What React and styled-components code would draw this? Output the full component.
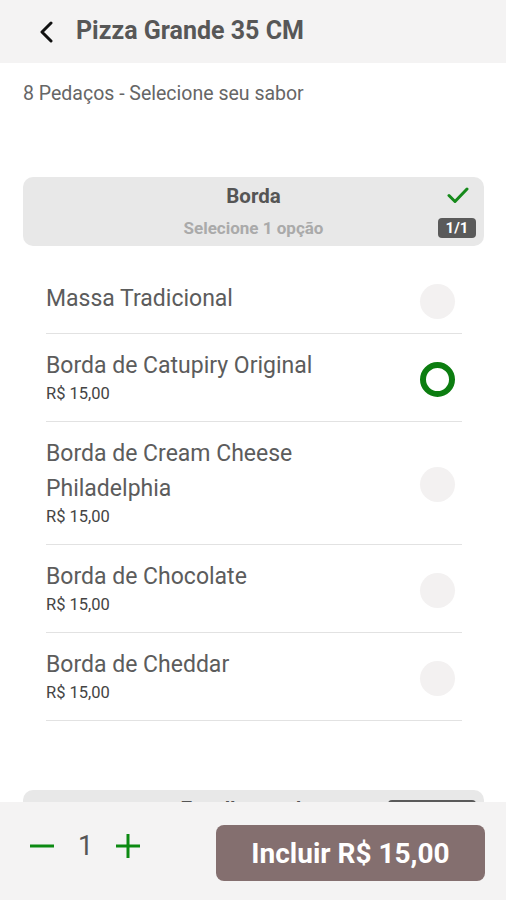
import React from "react";
import styled, { createGlobalStyle } from "styled-components";

const Global = createGlobalStyle`
  html, body { margin: 0; padding: 0; background: #ffffff; }
  body { font-family: Roboto, "Noto Sans", Arial, sans-serif; color: #5a5a5a; }
  * { box-sizing: border-box; }
`;

const Page = styled.div`
  width: 506px;
  min-height: 900px;
  padding-bottom: 200px;
  background: #fff;
`;

const Header = styled.header`
  height: 63px;
  background: #f4f3f3;
  display: flex;
  align-items: center;
  padding-left: 36px;
  gap: 20px;
`;

const BackButton = styled.button`
  border: 0;
  background: transparent;
  padding: 0;
  width: 20px;
  height: 24px;
  display: flex;
  align-items: center;
  justify-content: center;
  color: #111;
`;

const Title = styled.h1`
  margin: 0;
  font-size: 25px;
  font-weight: 700;
  color: #575757;
  line-height: 1;
  margin-top: -2px;
`;

const Subtitle = styled.p`
  margin: 19px 0 0 23px;
  font-size: 19.5px;
  line-height: 24px;
  color: #666;
`;

const Section = styled.section`
  margin: ${(p) => p.$top}px 22px 0 23px;
`;

const SectionHead = styled.div`
  position: relative;
  background: #e8e8e8;
  border-radius: 10px;
  height: 69px;
  display: flex;
  flex-direction: column;
  align-items: center;
  padding-top: 7px;
`;

const SectionTitle = styled.div`
  font-size: 20.5px;
  font-weight: 700;
  color: #555;
  line-height: 24px;
`;

const SectionHint = styled.div`
  font-size: 17px;
  font-weight: 700;
  color: #aaa;
  line-height: 20px;
  margin-top: 10px;
`;

const CheckMark = styled.div`
  position: absolute;
  right: 15px;
  top: 9px;
  width: 22px;
  height: 18px;
`;

const Badge = styled.span`
  position: absolute;
  right: 8px;
  top: ${(p) => p.$top}px;
  background: #5a5a5a;
  color: #fff;
  font-size: 15px;
  font-weight: 700;
  border-radius: 4px;
  padding: 0 6px;
  height: 20px;
  line-height: 20px;
  min-width: 38px;
  text-align: center;
`;

const OptionList = styled.ul`
  list-style: none;
  margin: 21px 44px 0 46px;
  padding: 0;
`;

const Option = styled.li`
  display: flex;
  align-items: center;
  justify-content: space-between;
  padding: 14px 7px 17px 0;
  border-bottom: 1px solid #e2e2e2;
`;

const OptionText = styled.div`
  display: flex;
  flex-direction: column;
  max-width: 300px;
`;

const OptionName = styled.span`
  font-size: 23px;
  line-height: 35px;
  color: #5c5c5c;
`;

const OptionPrice = styled.span`
  font-size: 16.5px;
  line-height: 21px;
  color: #444;
`;

const Radio = styled.span`
  flex: none;
  width: 35px;
  height: 35px;
  border-radius: 50%;
  margin: 3px 0 -3px;
  background: ${(p) => (p.$checked ? "#fff" : "#f3f1f1")};
  border: ${(p) => (p.$checked ? "6px solid #0c7d10" : "none")};
`;

const BottomBar = styled.footer`
  position: fixed;
  left: 0;
  right: 0;
  bottom: 0;
  height: 98px;
  background: #f4f3f3;
  display: flex;
  align-items: center;
  justify-content: space-between;
  padding: 0 21px 0 28px;
`;

const Stepper = styled.div`
  display: flex;
  align-items: center;
  gap: 22px;
  margin-top: -10px;
`;

const StepButton = styled.button`
  border: 0;
  background: transparent;
  padding: 0;
  width: 28px;
  height: 28px;
  display: flex;
  align-items: center;
  justify-content: center;
`;

const Qty = styled.span`
  font-size: 27px;
  color: #555;
  width: 14px;
  text-align: center;
`;

const AddButton = styled.button`
  border: 0;
  background: #846f6f;
  color: #fff;
  width: 269px;
  height: 56px;
  border-radius: 8px;
  font-family: Roboto, "Noto Sans", Arial, sans-serif;
  font-size: 28px;
  font-weight: 700;
  margin-top: 4px;
`;

const options = [
  { name: "Massa Tradicional" },
  { name: "Borda de Catupiry Original", price: "R$ 15,00", checked: true },
  { name: "Borda de Cream Cheese Philadelphia", price: "R$ 15,00" },
  { name: "Borda de Chocolate", price: "R$ 15,00" },
  { name: "Borda de Cheddar", price: "R$ 15,00" },
];

export default function App() {
  return (
    <>
      <Global />
      <Page>
        <Header>
          <BackButton aria-label="Voltar">
            <svg width="14" height="22" viewBox="0 0 14 22">
              <path d="M12 2 L3 11 L12 20" fill="none" stroke="#111" strokeWidth="3" strokeLinecap="round" strokeLinejoin="round" />
            </svg>
          </BackButton>
          <Title>Pizza Grande 35 CM</Title>
        </Header>
        <Subtitle>8 Pedaços - Selecione seu sabor</Subtitle>

        <Section $top={71}>
          <SectionHead>
            <SectionTitle>Borda</SectionTitle>
            <SectionHint>Selecione 1 opção</SectionHint>
            <CheckMark>
              <svg width="22" height="18" viewBox="0 0 22 18">
                <path d="M2 9.5 L8 15.5 L20 3" fill="none" stroke="#168a1b" strokeWidth="3" strokeLinecap="round" strokeLinejoin="round" />
              </svg>
            </CheckMark>
            <Badge $top={41}>1/1</Badge>
          </SectionHead>
        </Section>

        <OptionList>
          {options.map((o) => (
            <Option key={o.name}>
              <OptionText>
                <OptionName>{o.name}</OptionName>
                {o.price && <OptionPrice>{o.price}</OptionPrice>}
              </OptionText>
              <Radio $checked={o.checked} />
            </Option>
          ))}
        </OptionList>

        <Section $top={69}>
          <SectionHead>
            <SectionTitle>Escolha o sabor</SectionTitle>
            <Badge $top={10}>Obrigatório</Badge>
          </SectionHead>
        </Section>
      </Page>

      <BottomBar>
        <Stepper>
          <StepButton aria-label="Diminuir">
            <svg width="26" height="26" viewBox="0 0 26 26">
              <path d="M1 13 H25" stroke="#0c8a12" strokeWidth="3" />
            </svg>
          </StepButton>
          <Qty>1</Qty>
          <StepButton aria-label="Aumentar">
            <svg width="26" height="26" viewBox="0 0 26 26">
              <path d="M1 13 H25 M13 1 V25" stroke="#0c8a12" strokeWidth="3" />
            </svg>
          </StepButton>
        </Stepper>
        <AddButton>Incluir R$ 15,00</AddButton>
      </BottomBar>
    </>
  );
}
